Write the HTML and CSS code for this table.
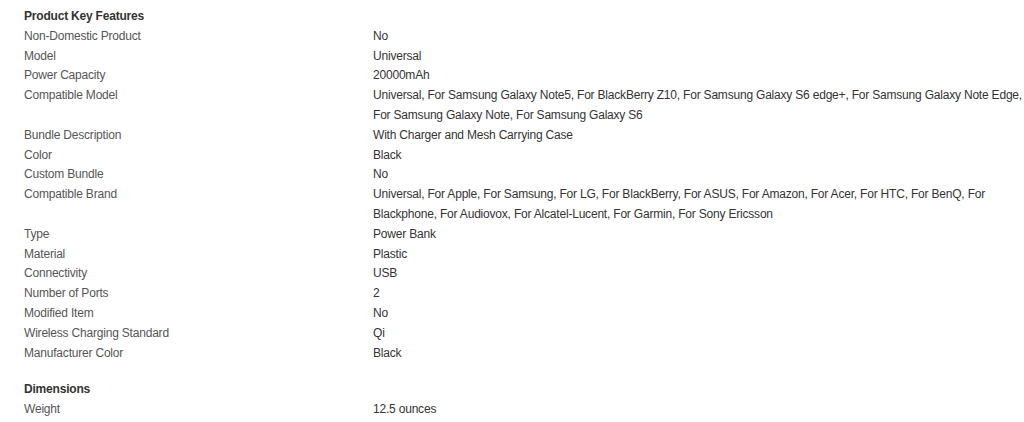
FILE: index.html
```html
<!DOCTYPE html>
<html lang="en">
<head>
  <meta charset="UTF-8" />
  <title>Item Specifics</title>
  <link rel="stylesheet" href="styles.css">
</head>
<body>
<div class="specs">
  <section class="spec-group">
    <h2>Product Key Features</h2>
    <dl>
      <dt>Non-Domestic Product</dt><dd>No</dd>
      <dt>Model</dt><dd>Universal</dd>
      <dt>Power Capacity</dt><dd>20000mAh</dd>
      <dt>Compatible Model</dt><dd>Universal, For Samsung Galaxy Note5, For BlackBerry Z10, For Samsung Galaxy S6 edge+, For Samsung Galaxy Note Edge, For Samsung Galaxy Note, For Samsung Galaxy S6</dd>
      <dt>Bundle Description</dt><dd>With Charger and Mesh Carrying Case</dd>
      <dt>Color</dt><dd>Black</dd>
      <dt>Custom Bundle</dt><dd>No</dd>
      <dt>Compatible Brand</dt><dd>Universal, For Apple, For Samsung, For LG, For BlackBerry, For ASUS, For Amazon, For Acer, For HTC, For BenQ, For Blackphone, For Audiovox, For Alcatel-Lucent, For Garmin, For Sony Ericsson</dd>
      <dt>Type</dt><dd>Power Bank</dd>
      <dt>Material</dt><dd>Plastic</dd>
      <dt>Connectivity</dt><dd>USB</dd>
      <dt>Number of Ports</dt><dd>2</dd>
      <dt>Modified Item</dt><dd>No</dd>
      <dt>Wireless Charging Standard</dt><dd>Qi</dd>
      <dt>Manufacturer Color</dt><dd>Black</dd>
    </dl>
  </section>
  <section class="spec-group">
    <h2>Dimensions</h2>
    <dl>
      <dt>Weight</dt><dd>12.5 ounces</dd>
    </dl>
  </section>
</div>
</body>
</html>
```

FILE: styles.css
```css
body {
  font-family: "Liberation Sans", Arial, Helvetica, sans-serif;
  font-size: 12px;
  line-height: 19.8px;
  letter-spacing: -0.2px;
  color: #333;
  background: #fff;
  margin: 0;
  padding: 7px 0 0 24px;
}
.spec-group {
  margin-bottom: 17px;
}
h2 {
  font-size: 12px;
  font-weight: bold;
  margin: 0;
  color: #333;
}
dl {
  display: grid;
  grid-template-columns: 349px 1fr;
  margin: 0;
}
dt {
  color: #555;
}
dd {
  margin: 0;
  color: #333;
}
```
